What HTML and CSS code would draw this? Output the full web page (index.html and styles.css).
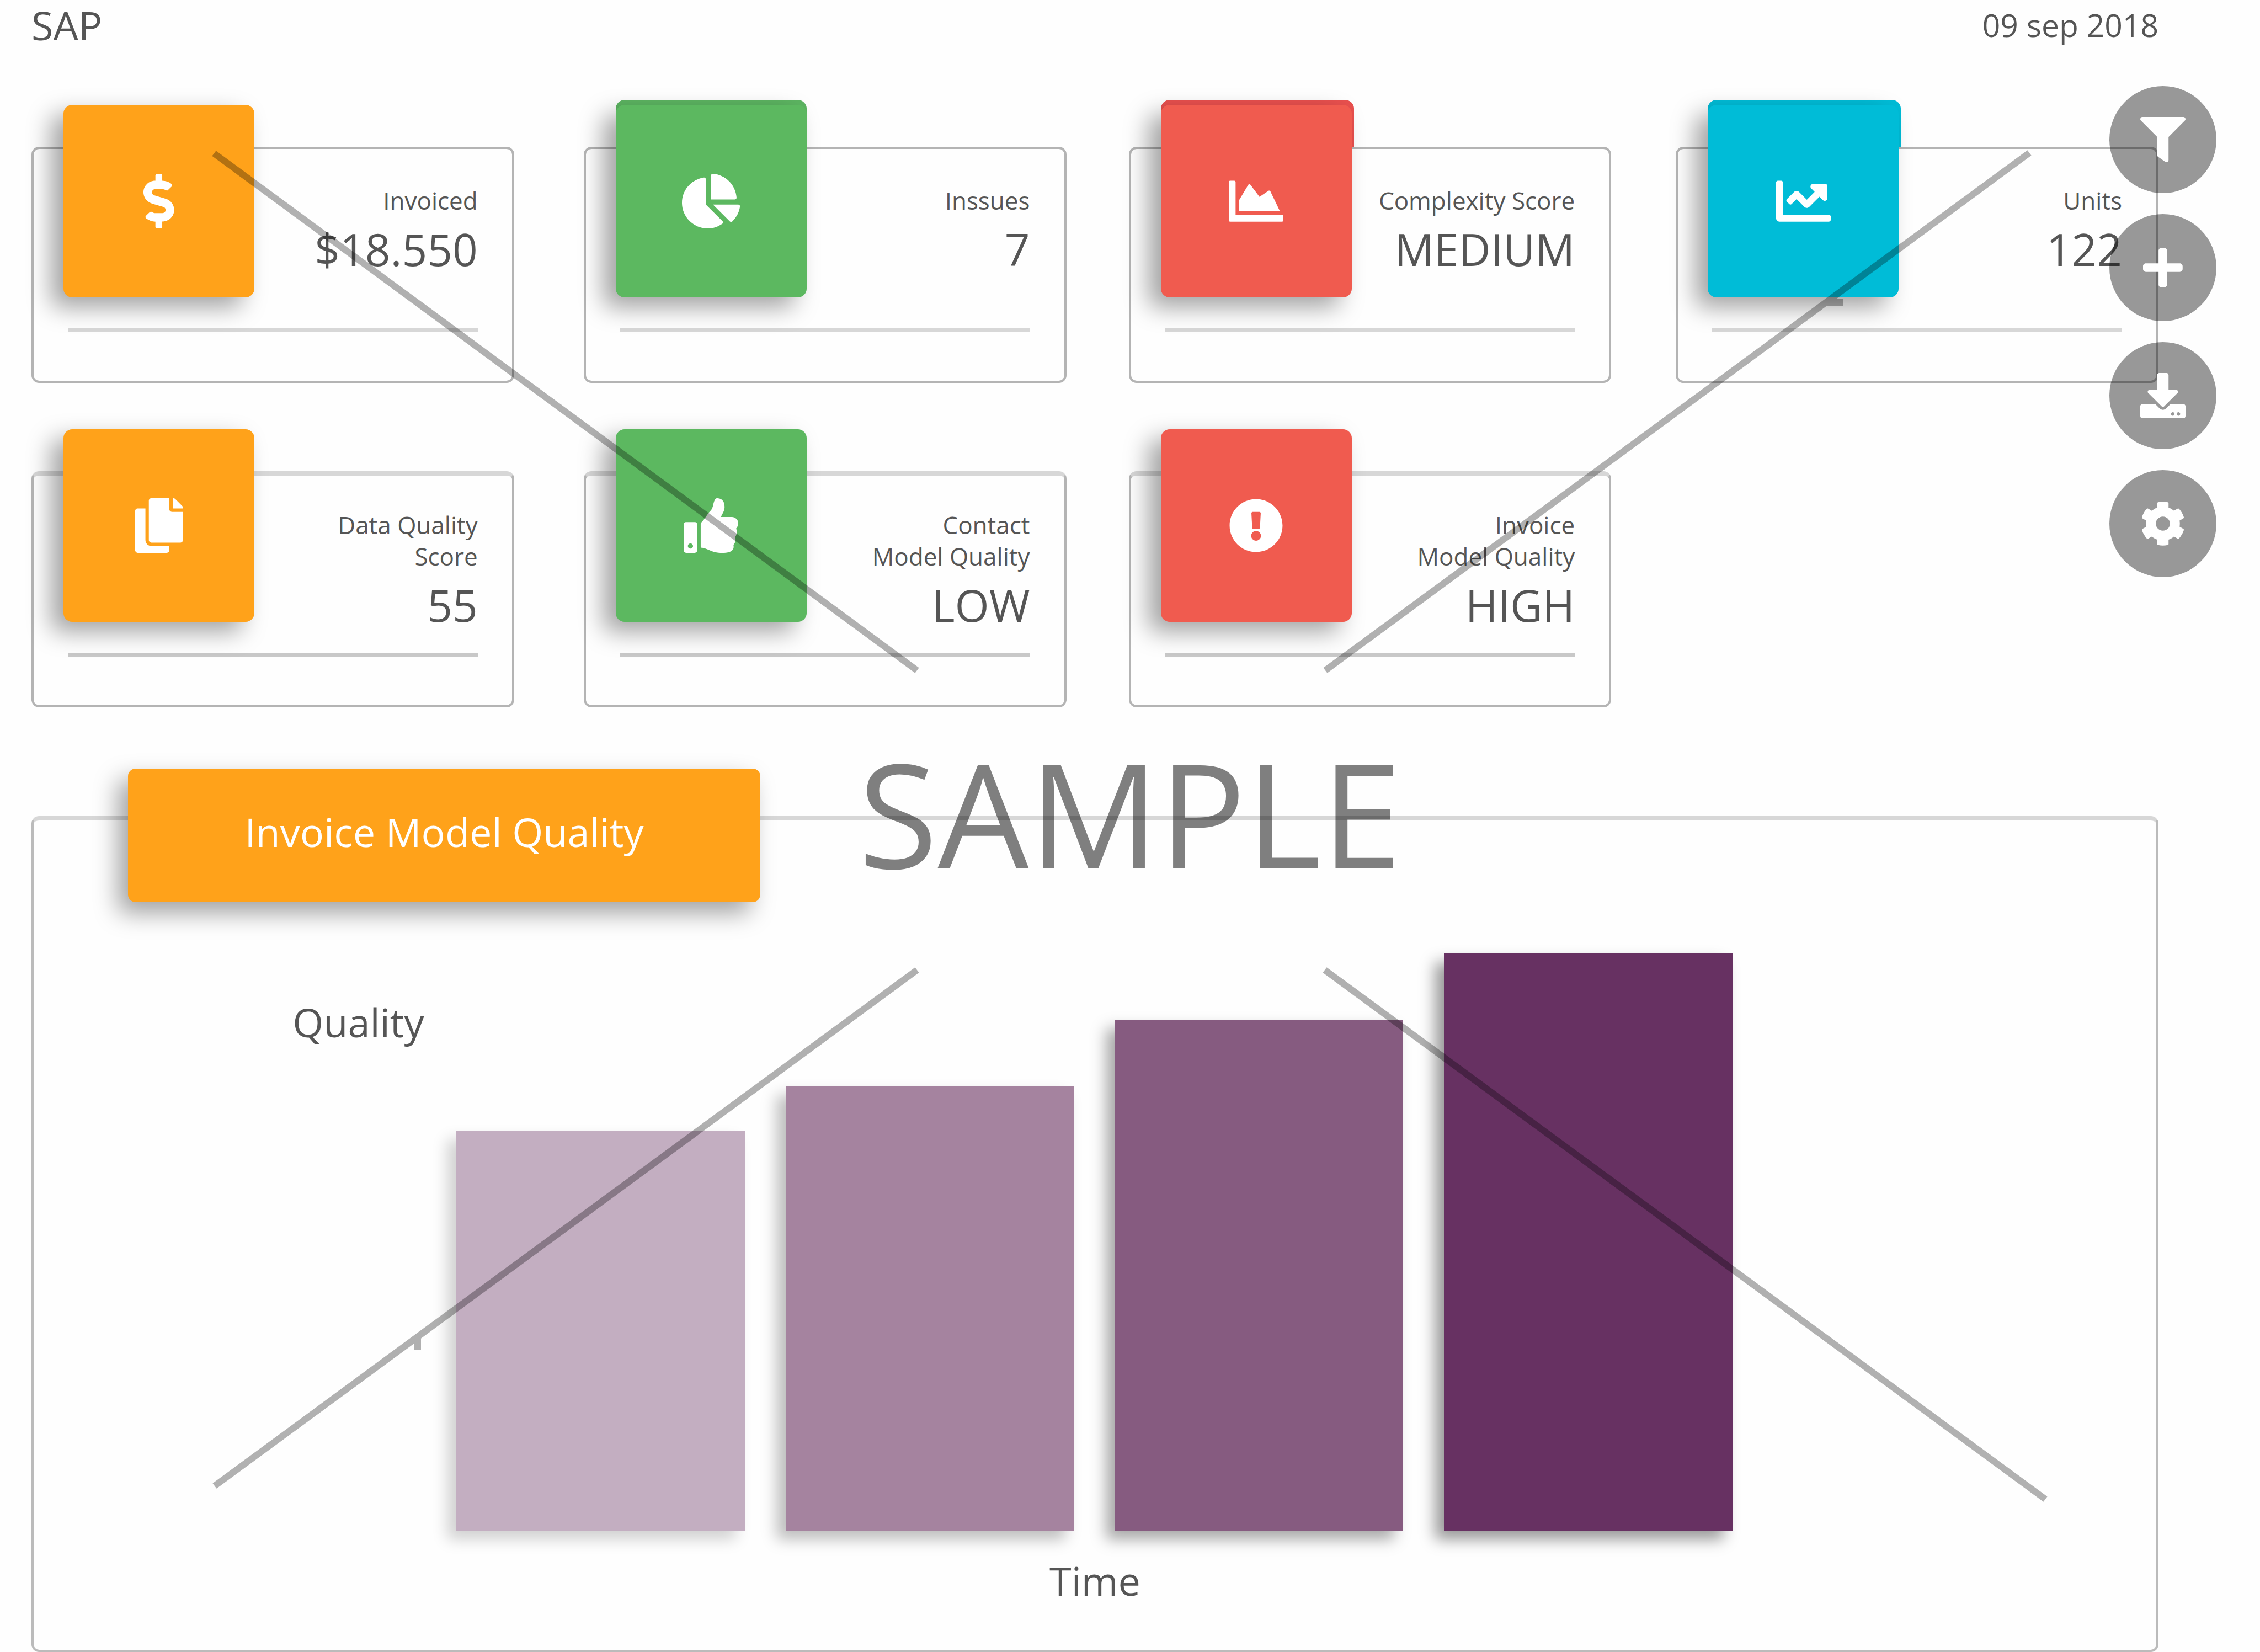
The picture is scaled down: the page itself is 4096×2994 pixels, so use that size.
FILE: index.html
```html
<!DOCTYPE html>
<html lang="en">
<head>
<meta charset="utf-8">
<title>SAP dashboard</title>
<link rel="stylesheet" href="styles.css">
</head>
<body>
<div class="page">
  <header class="topbar">
    <h1 class="brand">SAP</h1>
    <time class="date" datetime="2018-09-09">09 sep 2018</time>
  </header>

  <main class="main">
    <section class="cards">
      <article class="card">
        <div class="card-head">
          <div class="tile tile-orange">
            <svg class="icon" viewBox="0 0 288 512"><path d="M209.200 233.400l-108-31.600C88.700 198.200 80 186.500 80 173.500c0-16.300 13.200-29.500 29.500-29.500h66.300c12.200 0 24.200 3.700 34.200 10.500 6.100 4.100 14.300 3.100 19.500-2l34.800-34c7.100-6.900 6.100-18.400-1.800-24.500C238 74.800 207.400 64.100 176 64V16c0-8.800-7.200-16-16-16h-32c-8.800 0-16 7.200-16 16v48h-2.500C45.800 64-5.400 118.700.5 183.600c4.200 46.100 39.400 83.600 83.800 96.600l102.500 30c12.500 3.700 21.200 15.300 21.200 28.300 0 16.300-13.200 29.500-29.500 29.500h-66.300C100 368 88 364.300 78 357.500c-6.100-4.100-14.300-3.100-19.500 2l-34.800 34c-7.100 6.900-6.100 18.400 1.800 24.500 24.500 19.200 55.100 29.900 86.500 30v48c0 8.800 7.200 16 16 16h32c8.800 0 16-7.200 16-16v-48.200c46.600-.9 90.300-28.600 105.700-72.700 21.500-61.600-14.600-124.800-72.500-141.700z"/></svg>
          </div>
          <div class="card-text">
            <h2 class="label">Invoiced</h2>
            <p class="value">$18.550</p>
          </div>
        </div>
        <hr class="rule">
      </article>

      <article class="card">
        <div class="card-head">
          <div class="tile tile-green tile-tall">
            <svg class="icon" viewBox="0 0 544 512"><path d="M527.790 288H290.500l158.030 158.030c6.040 6.040 15.980 6.530 22.190.68 38.700-36.460 65.320-85.610 73.130-140.860 1.340-9.460-6.510-17.850-16.060-17.850zm-15.830-64.800C503.720 103.740 408.260 8.280 288.800.04 279.680-.59 272 7.100 272 16.240V240h223.770c9.140 0 16.820-7.680 16.190-16.800zM224 288V50.710c0-9.550-8.390-17.400-17.840-16.060C86.990 51.490-4.100 155.600.14 280.370 4.500 408.510 114.830 513.590 243.030 511.980c50.400-.63 96.970-16.870 135.260-44.030 7.900-5.600 8.420-17.230 1.570-24.080L224 288z"/></svg>
          </div>
          <div class="card-text">
            <h2 class="label">Inssues</h2>
            <p class="value">7</p>
          </div>
        </div>
        <hr class="rule">
      </article>

      <article class="card">
        <div class="card-head">
          <div class="tile tile-red tile-tall tile-lip">
            <svg class="icon" viewBox="0 0 512 512"><path d="M500 384c6.600 0 12 5.400 12 12v40c0 6.600-5.400 12-12 12H12c-6.600 0-12-5.400-12-12V76c0-6.600 5.400-12 12-12h40c6.600 0 12 5.400 12 12v308h436zM372.700 159.500L288 216l-85.300-113.700c-5.100-6.800-15.500-6.300-19.900 1L96 248v104h384l-89.900-187.800c-3.200-6.500-11.400-8.700-17.400-4.700z"/></svg>
          </div>
          <div class="card-text">
            <h2 class="label">Complexity Score</h2>
            <p class="value">MEDIUM</p>
          </div>
        </div>
        <hr class="rule">
      </article>

      <article class="card">
        <div class="card-head">
          <div class="tile tile-cyan tile-tall tile-lip">
            <svg class="icon" viewBox="0 0 512 512"><path d="M496 384H64V80c0-8.840-7.160-16-16-16H16C7.160 64 0 71.160 0 80v336c0 17.670 14.330 32 32 32h464c8.840 0 16-7.160 16-16v-32c0-8.840-7.160-16-16-16zM464 96H345.940c-21.380 0-32.090 25.850-16.970 40.970l32.400 32.400L288 242.750l-73.370-73.370c-12.500-12.500-32.760-12.500-45.250 0l-68.690 68.690c-6.250 6.250-6.250 16.380 0 22.630l22.620 22.620c6.250 6.250 16.380 6.250 22.630 0L192 237.250l73.370 73.370c12.500 12.500 32.760 12.500 45.250 0l96-96 32.400 32.400c15.120 15.120 40.970 4.410 40.970-16.970V112c.01-8.840-7.150-16-15.990-16z"/></svg>
          </div>
          <div class="card-text">
            <h2 class="label">Units</h2>
            <p class="value">122</p>
          </div>
        </div>
        <hr class="rule">
      </article>

      <article class="card card-second">
        <div class="card-head">
          <div class="tile tile-orange">
            <svg class="icon" viewBox="0 0 448 512"><path d="M320 448v40c0 13.255-10.745 24-24 24H24c-13.255 0-24-10.745-24-24V120c0-13.255 10.745-24 24-24h72v296c0 30.879 25.121 56 56 56h168zm0-344V0H152c-13.255 0-24 10.745-24 24v368c0 13.255 10.745 24 24 24h272c13.255 0 24-10.745 24-24V128H344c-13.200 0-24-10.800-24-24zm120.971-31.029L375.029 7.029A24 24 0 0 0 358.059 0H352v96h96v-6.059a24 24 0 0 0-7.029-16.970z"/></svg>
          </div>
          <div class="card-text">
            <h2 class="label">Data Quality<br>Score</h2>
            <p class="value">55</p>
          </div>
        </div>
        <hr class="rule">
      </article>

      <article class="card card-second">
        <div class="card-head">
          <div class="tile tile-green">
            <svg class="icon" viewBox="0 0 512 512"><path d="M104 224H24c-13.255 0-24 10.745-24 24v240c0 13.255 10.745 24 24 24h80c13.255 0 24-10.745 24-24V248c0-13.255-10.745-24-24-24zM64 472c-13.255 0-24-10.745-24-24s10.745-24 24-24 24 10.745 24 24-10.745 24-24 24zM384 81.452c0 42.416-25.970 66.208-33.277 94.548h101.723c33.397 0 59.397 27.746 59.553 58.098.084 17.938-7.546 37.249-19.439 49.197l-.11.110c9.836 23.337 8.237 56.037-9.308 79.469 8.681 25.895-.069 57.704-16.382 74.757 4.298 17.598 2.244 32.575-6.148 44.632C440.202 511.587 389.616 512 346.839 512l-2.845-.001c-48.287-.017-87.806-17.598-119.560-31.725-15.957-7.099-36.821-15.887-52.651-16.178-6.540-.120-11.783-5.457-11.783-11.998v-213.770c0-3.200 1.282-6.271 3.558-8.521 39.614-39.144 56.648-80.587 89.117-113.111 14.804-14.832 20.188-37.236 25.393-58.902C282.515 39.293 291.817 0 312 0c24 0 72 8 72 81.452z"/></svg>
          </div>
          <div class="card-text">
            <h2 class="label">Contact<br>Model Quality</h2>
            <p class="value">LOW</p>
          </div>
        </div>
        <hr class="rule">
      </article>

      <article class="card card-second">
        <div class="card-head">
          <div class="tile tile-red">
            <svg class="icon" viewBox="0 0 512 512"><path d="M504 256c0 136.997-111.043 248-248 248S8 392.997 8 256C8 119.083 119.043 8 256 8s248 111.083 248 248zm-248 50c-25.405 0-46 20.595-46 46s20.595 46 46 46 46-20.595 46-46-20.595-46-46-46zm-43.673-165.346l7.418 136c.347 6.364 5.609 11.346 11.982 11.346h48.546c6.373 0 11.635-4.982 11.982-11.346l7.418-136c.375-6.874-5.098-12.654-11.982-12.654h-63.383c-6.884 0-12.356 5.780-11.981 12.654z"/></svg>
          </div>
          <div class="card-text">
            <h2 class="label">Invoice<br>Model Quality</h2>
            <p class="value">HIGH</p>
          </div>
        </div>
        <hr class="rule">
      </article>
    </section>

    <section class="panel">
      <h2 class="panel-title">Invoice Model Quality</h2>
      <div class="chart">
        <p class="axis axis-y">Quality</p>
        <div class="bars">
          <div class="bar bar-1" style="height: 69.300%"></div>
          <div class="bar bar-2" style="height: 77%"></div>
          <div class="bar bar-3" style="height: 88.500%"></div>
          <div class="bar bar-4" style="height: 100%"></div>
        </div>
      </div>
      <p class="axis axis-x">Time</p>
    </section>
  </main>

  <nav class="actions">
    <button class="action" type="button" aria-label="Filter">
      <svg viewBox="0 0 512 512"><path d="M487.976 0H24.028C2.710 0-8.047 25.866 7.058 40.971L192 225.941V432c0 7.831 3.821 15.170 10.237 19.662l80 55.980C298.020 518.690 320 507.493 320 487.980V225.941l184.947-184.970C520.021 25.896 509.338 0 487.976 0z"/></svg>
    </button>
    <button class="action" type="button" aria-label="Add">
      <svg viewBox="0 0 448 512"><path d="M416 208H272V64c0-17.670-14.330-32-32-32h-32c-17.670 0-32 14.330-32 32v144H32c-17.670 0-32 14.330-32 32v32c0 17.670 14.330 32 32 32h144v144c0 17.670 14.330 32 32 32h32c17.670 0 32-14.330 32-32V304h144c17.670 0 32-14.330 32-32v-32c0-17.670-14.330-32-32-32z"/></svg>
    </button>
    <button class="action" type="button" aria-label="Download">
      <svg viewBox="0 0 512 512"><path d="M216 0h80c13.300 0 24 10.700 24 24v168h87.700c17.800 0 26.700 21.500 14.100 34.100L269.700 378.300c-7.500 7.500-19.800 7.500-27.300 0L90.100 226.100c-12.600-12.600-3.700-34.100 14.100-34.100H192V24c0-13.300 10.700-24 24-24zm296 376v112c0 13.300-10.700 24-24 24H24c-13.300 0-24-10.700-24-24V376c0-13.300 10.700-24 24-24h146.700l49 49c20.100 20.100 52.500 20.100 72.600 0l49-49H488c13.300 0 24 10.700 24 24zm-124 88c0-11-9-20-20-20s-20 9-20 20 9 20 20 20 20-9 20-20zm64 0c0-11-9-20-20-20s-20 9-20 20 9 20 20 20 20-9 20-20z"/></svg>
    </button>
    <button class="action" type="button" aria-label="Settings">
      <svg viewBox="0 0 512 512"><path d="M487.400 315.700l-42.600-24.600c4.300-23.200 4.300-47 0-70.200l42.600-24.600c4.900-2.800 7.100-8.600 5.500-14-11.100-35.600-30-67.800-54.700-94.600-3.800-4.100-10-5.100-14.800-2.300L380.800 110c-17.900-15.400-38.500-27.300-60.800-35.100V25.800c0-5.600-3.900-10.500-9.400-11.700-36.700-8.200-74.300-7.800-109.200 0-5.500 1.200-9.400 6.100-9.400 11.700V75c-22.200 7.900-42.800 19.800-60.800 35.100L88.700 85.500c-4.900-2.800-11-1.900-14.800 2.300-24.700 26.700-43.600 58.900-54.700 94.600-1.700 5.400.6 11.200 5.500 14L67.300 221c-4.300 23.200-4.300 47 0 70.200l-42.600 24.600c-4.900 2.800-7.100 8.600-5.500 14 11.100 35.600 30 67.800 54.700 94.600 3.800 4.100 10 5.100 14.800 2.300l42.600-24.600c17.900 15.400 38.500 27.300 60.800 35.100v49.200c0 5.600 3.900 10.500 9.400 11.700 36.700 8.200 74.300 7.800 109.200 0 5.500-1.200 9.400-6.100 9.400-11.700v-49.200c22.200-7.900 42.800-19.800 60.800-35.100l42.600 24.600c4.900 2.800 11 1.900 14.800-2.300 24.700-26.700 43.600-58.900 54.700-94.600 1.500-5.500-.7-11.300-5.600-14.100zM256 336c-44.100 0-80-35.900-80-80s35.900-80 80-80 80 35.900 80 80-35.900 80-80 80z"/></svg>
    </button>
  </nav>

  <svg class="watermark" viewBox="0 0 4096 2994" preserveAspectRatio="none">
    <g class="watermark-lines">
      <path d="M388 278L1662 1215M3678 277L2402 1215M1662 1758L389 2693M2401 1758L3707 2717"/>
      <path d="M3309 548H3340M757 2427V2447"/>
    </g>
    <text class="watermark-text" x="2048" y="1574">SAMPLE</text>
  </svg>
</div>
</body>
</html>
```
FILE: styles.css
```css
* {
  box-sizing: border-box;
}

body {
  margin: 0;
  background: #fefefe;
  color: #555;
  font-family: "Open Sans", "Noto Sans", sans-serif;
}

h1,
h2,
p {
  margin: 0;
  font-weight: 400;
}

.page {
  position: relative;
  display: flex;
  flex-direction: column;
  min-height: 100vh;
  padding: 0 184px 0 57px;
}

/* Header */

.topbar {
  display: flex;
  justify-content: space-between;
  align-items: center;
  line-height: 90px;
}

.brand {
  font-size: 72px;
}

.date {
  font-size: 57px;
}

.main {
  flex: 1;
  display: flex;
  flex-direction: column;
  gap: 197px;
  padding-top: 176px;
}

/* Score cards */

.cards {
  display: grid;
  grid-template-columns: 1fr 126px 1fr 113px 1fr 117px 1fr;
  row-gap: 160px;
}

.card {
  display: flex;
  flex-direction: column;
  isolation: isolate;
  min-height: 428px;
  border: 4px solid #b4b4b4;
  border-radius: 14px;
}

.card:nth-child(4n + 1) { grid-column: 1; }
.card:nth-child(4n + 2) { grid-column: 3; }
.card:nth-child(4n + 3) { grid-column: 5; }
.card:nth-child(4n) { grid-column: 7; }

.card-second {
  border-top: 8px solid #d7d7d7;
}

.card-head {
  display: flex;
  justify-content: space-between;
  align-items: flex-start;
  padding: 0 62px 0 54px;
}

.tile {
  position: relative;
  display: flex;
  justify-content: center;
  align-items: center;
  flex: none;
  width: 346px;
  height: 349px;
  margin-top: -80px;
  border-radius: 16px;
  background: var(--tile);
  box-shadow: -22px 18px 44px rgba(0, 0, 0, 0.36);
}

.tile-tall::before {
  content: "";
  position: absolute;
  z-index: -1;
  inset: -9px 0 auto 0;
  height: 85px;
  border-radius: 16px 16px 0 0;
  background: var(--tile-edge);
}

.tile-lip::before {
  right: -4px;
}

.card-second .tile {
  margin-top: -84px;
}

.tile-orange { --tile: #ffa21a; }
.tile-green { --tile: #5cb860; --tile-edge: #5cb461; }
.tile-red { --tile: #f05b4f; --tile-edge: #e8504e; }
.tile-cyan { --tile: #00bcd7; --tile-edge: #00bcd7; }

.icon {
  height: 99px;
  fill: #fff;
}

.card-text {
  padding-top: 65px;
  text-align: right;
}

.card-second .card-text {
  padding-top: 61px;
}

.label {
  font-size: 44px;
  line-height: 57px;
}

.value {
  font-size: 80px;
  line-height: 118px;
}

.rule {
  width: auto;
  height: 8px;
  margin: auto 62px 88px 62px;
  border: 0;
  background: #d7d7d7;
}

.card-second .rule {
  height: 6px;
  background: #c8c8c8;
}

/* Chart panel */

.panel {
  flex: 1;
  display: flex;
  flex-direction: column;
  padding-bottom: 77px;
  border: 4px solid #bbb;
  border-top: 8px solid #d7d7d7;
  border-radius: 14px;
}

.panel-title {
  align-self: flex-start;
  width: 1146px;
  margin: -94px 0 93px 171px;
  padding-bottom: 14px;
  border-radius: 14px;
  background: #ffa21a;
  box-shadow: -18px 20px 44px rgba(0, 0, 0, 0.36);
  color: #fff;
  font-size: 72px;
  line-height: 228px;
  text-align: center;
}

.chart {
  flex: 1;
  display: grid;
  grid-template-columns: 766fr 2315fr 768fr;
  min-height: 400px;
}

.axis {
  font-size: 72px;
  line-height: 98px;
}

.axis-y {
  justify-self: end;
  padding: 75px 58px 0 0;
}

.axis-x {
  margin-top: 41px;
  text-align: center;
}

.bars {
  display: flex;
  align-items: flex-end;
  gap: 74px;
}

.bar {
  flex: 1;
  background: var(--fill);
  box-shadow: -16px 16px 26px rgba(0, 0, 0, var(--shade));
}

.bar-1 { --fill: #c3aec1; --shade: 0.18; }
.bar-2 { --fill: #a5839f; --shade: 0.26; }
.bar-3 { --fill: #865b80; --shade: 0.34; }
.bar-4 { --fill: #673162; --shade: 0.4; }

/* Floating actions */

.actions {
  position: absolute;
  top: 156px;
  right: 79px;
  display: flex;
  flex-direction: column;
  gap: 38px;
}

.action {
  display: flex;
  justify-content: center;
  align-items: center;
  width: 194px;
  height: 194px;
  padding: 0;
  border: 0;
  border-radius: 50%;
  background: rgba(0, 0, 0, 0.4);
  cursor: pointer;
}

.action svg {
  height: 82px;
  fill: #fff;
}

/* Sample watermark */

.watermark {
  position: absolute;
  inset: 0;
  width: 100%;
  height: 100%;
  pointer-events: none;
}

.watermark-lines {
  fill: none;
  stroke: #000;
  stroke-width: 12px;
  opacity: 0.3;
}

.watermark-text {
  fill: #000;
  fill-opacity: 0.5;
  font-size: 262px;
  text-anchor: middle;
}
```
